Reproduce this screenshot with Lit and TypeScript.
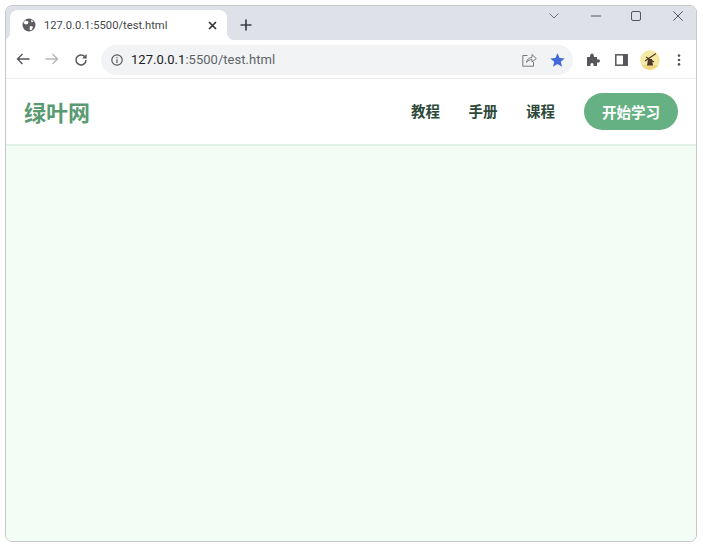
import { LitElement, html, css } from "lit";
import { customElement } from "lit/decorators.js";

@customElement("app-root")
export class AppRoot extends LitElement {
  static styles = css`
    :host { display: block; width: 703px; height: 548px; background: #fff; padding: 5px 6px 6px 5px; box-sizing: border-box;
      font-family: "Roboto", "Liberation Sans", "Noto Sans CJK SC", sans-serif; }
    .win { height: 100%; display: flex; flex-direction: column; border: 1px solid #c6c8cc; border-radius: 7px; overflow: hidden; box-sizing: border-box; background: #f3fcf5; }
    .titlebar { height: 34px; flex: none; background: #dee1e7; display: flex; align-items: flex-end; padding-left: 4px; }
    .tab { width: 217px; height: 30px; background: #fff; border-radius: 8px 8px 0 0; display: flex; align-items: center; box-sizing: border-box; padding: 0 10px 0 12px; position: relative; }
    .tab::before, .tab::after { content: ""; position: absolute; bottom: 0; width: 8px; height: 8px; }
    .tab::before { left: -8px; background: radial-gradient(circle at 0 0, transparent 8px, #fff 8.5px); }
    .tab::after { right: -8px; background: radial-gradient(circle at 100% 0, transparent 8px, #fff 8.5px); }
    .tab svg.globe { flex: none; margin-right: 8px; }
    .tab-title { flex: 1; font-size: 11.2px; color: #45474a; white-space: nowrap; }
    .newtab { margin: 0 0 9px 13px; display: flex; }
    .spacer { flex: 1; }
    .winctl { align-self: flex-start; display: flex; align-items: center; height: 20px; }
    .winctl svg { display: block; }
    .chev { margin-right: 32px; }
    .min { margin-right: 30px; }
    .max { margin-right: 32px; }
    .close { margin-right: 13px; }
    .toolbar { height: 37px; padding-top: 1px; flex: none; background: #fff; border-bottom: 1px solid #ececed; display: flex; align-items: center; padding-left: 10px; box-sizing: content-box; }
    .toolbar svg { display: block; flex: none; }
    .nav { display: flex; gap: 15px; margin-right: 13px; }
    .omni { width: 472px; height: 30px; border-radius: 15px; background: #f1f3f4; display: flex; align-items: center; padding: 0 8px 0 10px; box-sizing: border-box; }
    .url { margin-left: 8px; flex: 1; font-size: 13px; letter-spacing: 0.03px; color: #5f6368; white-space: nowrap; }
    .url b { font-weight: 400; color: #202124; }
    .omni .share { margin-right: 13px; }
    .tools { display: flex; align-items: center; margin-left: 13px; }
    .panel { margin-left: 15px; }
    .avatar { width: 20px; height: 20px; border-radius: 50%; margin: 0 17px 0 12px; }
    .page { flex: 1; display: flex; flex-direction: column; }
    .header { height: 65px; flex: none; background: #fff; border-bottom: 2px solid #e2f1e6; display: flex; align-items: center; padding: 0 18px 0 18px; }
    .logo { font-size: 22px; font-weight: 700; color: #5a9a72; font-family: "Noto Sans CJK SC", sans-serif; flex: 1; line-height: 1; padding-bottom: 2px; }
    .links { display: flex; gap: 28.5px; margin-right: 29px; padding-bottom: 1px; }
    .links span { font-size: 14.5px; font-weight: 700; color: #2e4a3a; font-family: "Noto Sans CJK SC", sans-serif; line-height: 1; }
    .cta { width: 94px; height: 37px; padding-bottom: 1px; box-sizing: border-box; border-radius: 19px; background: #65b183; color: #fff; font-size: 14.5px; font-weight: 700; display: flex; align-items: center; justify-content: center; font-family: "Noto Sans CJK SC", sans-serif; }
    .body { flex: 1; background: #f3fcf5; }
  `;

  render() {
    return html`<div class="win">
      <div class="titlebar">
        <div class="tab">
          <svg class="globe" width="14" height="14" viewBox="0 0 14 14">
            <circle cx="7" cy="7" r="6.5" fill="#5a5c60" />
            <path d="M3 2.5 L6.5 3.5 L6 6 L3.5 6.5 L1.5 5 Z M8 8 L11 8.5 L10 11.5 L8 12.5 L7.5 10 Z M9 1.5 L11.5 3.5 L9.5 4.5 Z" fill="#fff" />
          </svg>
          <span class="tab-title">127.0.0.1:5500/test.html</span>
          <svg width="9" height="9" viewBox="0 0 9 9"><path d="M1 1 L8 8 M8 1 L1 8" stroke="#303134" stroke-width="1.6" /></svg>
        </div>
        <div class="newtab">
          <svg width="12" height="12" viewBox="0 0 12 12"><path d="M6 0.5 V11.5 M0.5 6 H11.5" stroke="#3c4043" stroke-width="1.7" /></svg>
        </div>
        <div class="spacer"></div>
        <div class="winctl">
          <svg class="chev" width="10" height="6" viewBox="0 0 10 6"><path d="M0.5 0.5 L5 5 L9.5 0.5" fill="none" stroke="#6d7075" stroke-width="1" /></svg>
          <svg class="min" width="10" height="2" viewBox="0 0 10 2"><path d="M0 1 H10" stroke="#55575b" stroke-width="1" /></svg>
          <svg class="max" width="10" height="10" viewBox="0 0 10 10"><rect x="0.5" y="0.5" width="9" height="9" rx="1.5" fill="none" stroke="#55575b" /></svg>
          <svg class="close" width="10" height="10" viewBox="0 0 10 10"><path d="M0.3 0.3 L9.7 9.7 M9.7 0.3 L0.3 9.7" stroke="#55575b" stroke-width="1" /></svg>
        </div>
      </div>
      <div class="toolbar">
        <div class="nav">
          <svg width="14" height="12" viewBox="0 0 14 12"><path d="M13.5 6 H1.5 M6.5 1 L1.5 6 L6.5 11" fill="none" stroke="#55575b" stroke-width="1.4" /></svg>
          <svg width="14" height="12" viewBox="0 0 14 12"><path d="M0.5 6 H12.5 M7.5 1 L12.5 6 L7.5 11" fill="none" stroke="#b4b6b9" stroke-width="1.4" /></svg>
          <svg width="14" height="14" viewBox="0 0 14 14"><path d="M12 7 A5 5 0 1 1 10.5 3.4" fill="none" stroke="#55575b" stroke-width="1.5" /><path d="M12.6 1 V5.4 H8.2 Z" fill="#55575b" /></svg>
        </div>
        <div class="omni">
          <svg width="12" height="12" viewBox="0 0 12 12"><circle cx="6" cy="6" r="5.2" fill="none" stroke="#55575b" stroke-width="1.2" /><path d="M6 5.3 V9 M6 3 V4.3" stroke="#55575b" stroke-width="1.2" /></svg>
          <span class="url"><b>127.0.0.1</b>:5500/test.html</span>
          <svg class="share" width="15" height="14" viewBox="0 0 15 14"><path d="M5.5 2.5 H0.8 V13.2 H11.5 V9 M4.5 9.5 C5 6 7.5 4.5 10 4.5 V1.5 L14.3 5.5 L10 9 V6.5 C8 6.5 6 7.5 4.5 9.5 Z" fill="none" stroke="#77797d" stroke-width="1" /></svg>
          <svg width="15" height="14" viewBox="0 0 15 14"><path d="M7.5 0.3 L9.6 5 L14.7 5.4 L10.8 8.7 L12 13.7 L7.5 11 L3 13.7 L4.2 8.7 L0.3 5.4 L5.4 5 Z" fill="#4169d8" /></svg>
        </div>
        <div class="tools">
          <svg width="14" height="14" viewBox="0 0 14 14"><path d="M1 4 H4 C4 1 5 0.5 6 0.5 C7 0.5 8 1.5 8 4 H11 V6.5 C13 6 14 7 14 8 C14 9 13 10 11 9.5 V13 H7.5 C8 11 7 10 6 10 C5 10 4 11 4.5 13 H1 Z" fill="#55575b" /></svg>
          <svg class="panel" width="13" height="12" viewBox="0 0 13 12"><rect x="0.8" y="0.8" width="11.4" height="10.4" fill="none" stroke="#55575b" stroke-width="1.5" /><rect x="8" y="1" width="4" height="10" fill="#55575b" /></svg>
          <svg class="avatar" viewBox="0 0 20 20">
            <circle cx="10" cy="10" r="10" fill="#f6e9a6" />
            <path d="M1 15 H19 A10 10 0 0 1 1 15 Z" fill="#eed77c" />
            <path d="M7 15.5 L8 9 H12 L13 15.5 Z" fill="#4e3a2a" />
            <path d="M5 11 L16 3.5 M6 7 L14 12" stroke="#4e3a2a" stroke-width="1.1" />
          </svg>
          <svg width="4" height="12" viewBox="0 0 4 12"><circle cx="2" cy="1.6" r="1.3" fill="#55575b" /><circle cx="2" cy="6" r="1.3" fill="#55575b" /><circle cx="2" cy="10.4" r="1.3" fill="#55575b" /></svg>
        </div>
      </div>
      <div class="page">
        <div class="header">
          <div class="logo">绿叶网</div>
          <div class="links"><span>教程</span><span>手册</span><span>课程</span></div>
          <div class="cta">开始学习</div>
        </div>
        <div class="body"></div>
      </div>
    </div>`;
  }
}
